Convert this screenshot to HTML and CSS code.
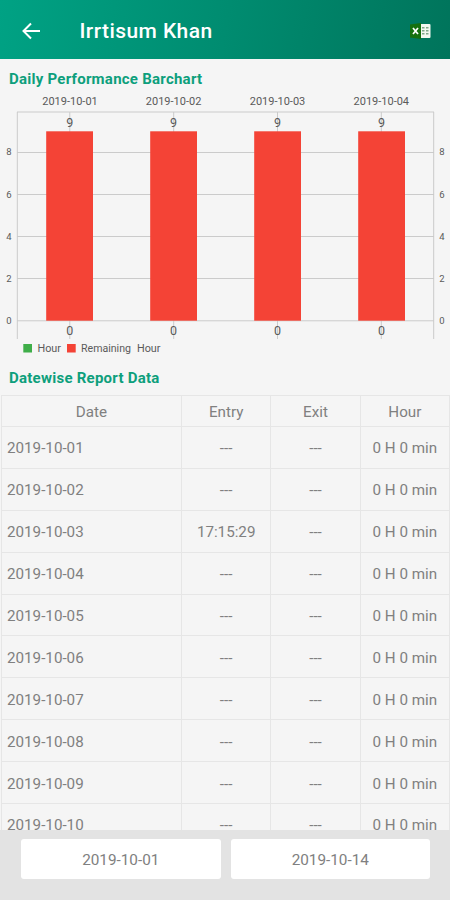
FILE: index.html
```html
<!DOCTYPE html>
<html lang="en">
<head>
  <meta charset="UTF-8" />
  <meta name="viewport" content="width=device-width, initial-scale=1.0" />
  <title>Irrtisum Khan - Report</title>
  <link rel="stylesheet" href="styles.css">
</head>
<body>
  <header class="app-bar">
    <a href="#" class="back-link" aria-label="Back">
      <svg width="18" height="18" viewBox="0 0 18 18">
        <path d="M18 9H2M9 1.5L1.5 9L9 16.5" fill="none" stroke="#fff" stroke-width="2" />
      </svg>
    </a>
    <h1 class="app-title">Irrtisum Khan</h1>
    <a href="#" class="export-link" aria-label="Export to Excel">
      <svg width="22" height="16" viewBox="0 0 22 16">
        <rect x="9" y="1" width="11.5" height="14" rx="1" fill="#f2f8f2" />
        <path d="M12 4h2.5v1.6H12zM16 4h2.5v1.6H16zM12 7h2.5v1.6H12zM16 7h2.5v1.6H16zM12 10h2.5v1.6H12zM16 10h2.5v1.6H16z" fill="#7fa789" />
        <path d="M0 1.5L11 0v16L0 14.5z" fill="#15700f" />
        <path d="M3 5l5 6M8 5l-5 6" stroke="#fff" stroke-width="1.7" />
      </svg>
    </a>
  </header>

  <main class="content">
    <h2 class="section-title">Daily Performance Barchart</h2>
    <svg class="chart" width="450" height="266" viewBox="0 92 450 266">
      <!-- Grid -->
      <g class="grid">
        <path d="M17 112H434M17 152.5H434M17 194.5H434M17 236.5H434M17 278.5H434M17 320.8H434" />
        <path d="M17.3 112V339M433.7 112V339M69.8 112V339M173.7 112V339M277.5 112V339M381.3 112V339" />
      </g>
      <!-- Bars -->
      <g class="bars">
        <rect x="46.2" y="131.3" width="46.8" height="189.4" />
        <rect x="150.2" y="131.3" width="46.8" height="189.4" />
        <rect x="254.2" y="131.3" width="46.8" height="189.4" />
        <rect x="358.2" y="131.3" width="46.8" height="189.4" />
      </g>
      <g class="x-labels">
        <text x="70" y="105.3" textLength="55.5" lengthAdjust="spacingAndGlyphs">2019-10-01</text>
        <text x="173.6" y="105.3" textLength="55.5" lengthAdjust="spacingAndGlyphs">2019-10-02</text>
        <text x="277.5" y="105.3" textLength="55.5" lengthAdjust="spacingAndGlyphs">2019-10-03</text>
        <text x="381.3" y="105.3" textLength="55.5" lengthAdjust="spacingAndGlyphs">2019-10-04</text>
      </g>
      <g class="values">
        <text x="69.7" y="126.6">9</text>
        <text x="173.6" y="126.6">9</text>
        <text x="277.5" y="126.6">9</text>
        <text x="381.5" y="126.6">9</text>
        <text x="69.7" y="335.4">0</text>
        <text x="173.6" y="335.4">0</text>
        <text x="277.5" y="335.4">0</text>
        <text x="381.5" y="335.4">0</text>
      </g>
      <g class="y-labels">
        <text x="9" y="155.4">8</text>
        <text x="9" y="197.5">6</text>
        <text x="9" y="239.5">4</text>
        <text x="9" y="281.5">2</text>
        <text x="9" y="323.7">0</text>
        <text x="442" y="155.4">8</text>
        <text x="442" y="197.5">6</text>
        <text x="442" y="239.5">4</text>
        <text x="442" y="281.5">2</text>
        <text x="442" y="323.7">0</text>
      </g>
      <!-- Legend -->
      <rect x="23.3" y="344" width="8.7" height="8.5" fill="#3fae49" />
      <rect x="67" y="344" width="8.7" height="8.5" fill="#f44336" />
      <g class="legend">
        <text x="37.5" y="352" textLength="23.5" lengthAdjust="spacingAndGlyphs">Hour</text>
        <text x="81" y="352" textLength="50" lengthAdjust="spacingAndGlyphs">Remaining</text>
        <text x="137" y="352" textLength="23.5" lengthAdjust="spacingAndGlyphs">Hour</text>
      </g>
    </svg>

    <h2 class="section-title report-title">Datewise Report Data</h2>
    <table class="report">
      <thead>
        <tr><th class="col-date">Date</th><th>Entry</th><th>Exit</th><th>Hour</th></tr>
      </thead>
      <tbody>
        <tr><td>2019-10-01</td><td>---</td><td>---</td><td>0 H 0 min</td></tr>
        <tr><td>2019-10-02</td><td>---</td><td>---</td><td>0 H 0 min</td></tr>
        <tr><td>2019-10-03</td><td>17:15:29</td><td>---</td><td>0 H 0 min</td></tr>
        <tr><td>2019-10-04</td><td>---</td><td>---</td><td>0 H 0 min</td></tr>
        <tr><td>2019-10-05</td><td>---</td><td>---</td><td>0 H 0 min</td></tr>
        <tr><td>2019-10-06</td><td>---</td><td>---</td><td>0 H 0 min</td></tr>
        <tr><td>2019-10-07</td><td>---</td><td>---</td><td>0 H 0 min</td></tr>
        <tr><td>2019-10-08</td><td>---</td><td>---</td><td>0 H 0 min</td></tr>
        <tr><td>2019-10-09</td><td>---</td><td>---</td><td>0 H 0 min</td></tr>
        <tr><td>2019-10-10</td><td>---</td><td>---</td><td>0 H 0 min</td></tr>
      </tbody>
    </table>
  </main>

  <footer class="date-range">
    <button class="date-button">2019-10-01</button>
    <button class="date-button">2019-10-14</button>
  </footer>
</body>
</html>
```

FILE: styles.css
```css
body {
  margin: 0;
  height: 900px;
  display: flex;
  flex-direction: column;
  overflow: hidden;
  font-family: Roboto, sans-serif;
  background: #f5f5f5;
  color: #808080;
}
/* Top bar */
.app-bar {
  flex: none;
  box-sizing: border-box;
  height: 59px;
  display: flex;
  align-items: center;
  padding: 2px 18px 0 22px;
  background: linear-gradient(100deg, #00a284 0%, #008c70 50%, #00745b 100%);
}
.back-link,
.export-link {
  display: flex;
}
.app-title {
  flex: 1;
  margin: 0 0 0 39.5px;
  font-size: 21px;
  line-height: 28px;
  font-weight: 500;
  letter-spacing: 0.42px;
  color: #fff;
}
/* Content */
.content {
  flex: 1;
  min-height: 0;
  overflow: hidden;
}
.section-title {
  margin: 0;
  padding: 10px 9px 3px;
  font-size: 15px;
  line-height: 20px;
  font-weight: 700;
  letter-spacing: 0.25px;
  color: #0d9f7c;
}
.report-title {
  padding: 10px 9px 7px;
}
.chart {
  display: block;
}
.grid {
  fill: none;
  stroke: #cbcbcb;
  stroke-width: 1;
}
.bars {
  fill: #f44336;
}
.chart text {
  text-anchor: middle;
  fill: #5a5a5a;
}
.chart .x-labels,
.chart .legend {
  font-size: 10px;
}
.chart .values {
  font-size: 12.5px;
}
.chart .y-labels {
  font-size: 9.5px;
}
.chart .legend text {
  text-anchor: start;
}
/* Report table */
.report {
  width: 449px;
  margin-left: 1px;
  table-layout: fixed;
  border-collapse: collapse;
  font-size: 15.2px;
}
.report th,
.report td {
  box-sizing: border-box;
  padding: 2px 0 0;
  border: 1px solid #e6e6e6;
  font-weight: 400;
  text-align: center;
}
.report th {
  height: 31px;
}
.report td {
  height: 41.9px;
}
.report .col-date {
  width: 180px;
}
.report td:first-child {
  padding-left: 5px;
  text-align: left;
}
/* Date range */
.date-range {
  flex: none;
  box-sizing: border-box;
  height: 70px;
  display: flex;
  gap: 10px;
  padding: 9px 20px 21px 21px;
  background: #e3e3e3;
}
.date-button {
  flex: 1;
  padding: 2px 0 0;
  border: 0;
  border-radius: 3px;
  background: #fff;
  font-family: inherit;
  font-size: 15.3px;
  color: #808080;
}
```
